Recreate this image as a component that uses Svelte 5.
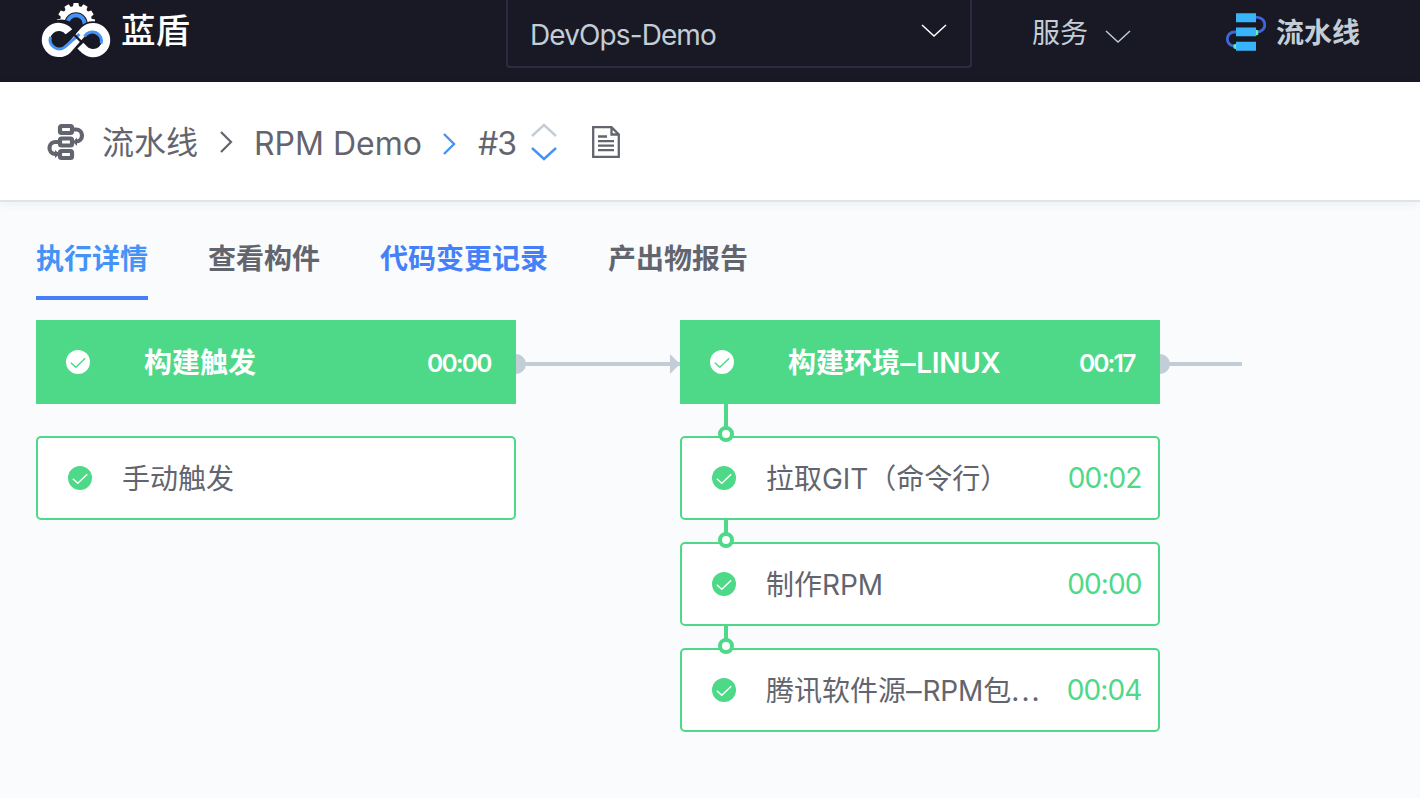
<script>
  const tabs = [
    { label: '执行详情', tone: 'active' },
    { label: '查看构件', tone: '' },
    { label: '代码变更记录', tone: 'hover' },
    { label: '产出物报告', tone: '' }
  ];
  const stages = [
    {
      name: '构建触发', dash: '', latin: '', time: '00:00', linked: false,
      atoms: [{ a: '手动触发', dash: '', b: '', c: '', more: '', time: '' }]
    },
    {
      name: '构建环境', dash: '–', latin: 'LINUX', time: '00:17', linked: true,
      atoms: [
        { a: '拉取', dash: '', b: 'GIT', c: '（命令行）', more: '', time: '00:02' },
        { a: '制作', dash: '', b: 'RPM', c: '', more: '', time: '00:00' },
        { a: '腾讯软件源', dash: '–', b: 'RPM', c: '包', more: '...', time: '00:04' }
      ]
    }
  ];
  const teeth = [-90, -60, -30, 0, 30, 60, 90];
</script>

{#snippet check(fill, mark)}
  <svg class="check" width="24" height="24" viewBox="0 0 24 24">
    <circle cx="12" cy="12" r="12" fill={fill} />
    <path d="M4.8 12.7 9.8 17.3 19.2 8.2" fill="none" stroke={mark} stroke-width="1.4" />
  </svg>
{/snippet}

<div class="page">
  <header>
    <div class="brand">
      <svg width="70" height="58" viewBox="41 0 70 58" fill="none">
        {#each teeth as angle}
          <path d="M72.6 8 73.6 3h4.8l1 5z" fill="#fff" transform={`rotate(${angle} 76 22)`} />
        {/each}
        <circle cx="76" cy="22" r="16" fill="#fff" />
        <circle cx="76" cy="24" r="11.7" fill="#191925" />
        <circle cx="76" cy="24" r="8.7" stroke="#4693f8" stroke-width="4" />
        <path d="M59 40H93L76 23z" fill="#191925" />
        <path d="M72 31.5A13 13 0 1 0 67.5 50L84 31A13 13 0 1 1 84 49.3L80.3 45.5" stroke="#191925" stroke-width="12" />
        <path d="M69 31.8A13 13 0 1 0 67.6 49.6L84.4 30.5A13 13 0 1 1 83 48.3L80.4 45.6" stroke="#fff" stroke-width="8.2" />
        <path d="M50.5 37A9.2 9.2 0 0 0 64.7 47.1L79.5 34.2" stroke="#4693f8" stroke-width="3" />
        <path d="M84.5 36.5A9.2 9.2 0 0 1 101.3 43.5" stroke="#4693f8" stroke-width="3" />
        <path d="M73 33.5 81.5 42" stroke="#191925" stroke-width="2.4" />
      </svg>
      <span>蓝盾</span>
    </div>
    <div class="select">
      <span>DevOps-Demo</span>
      <svg width="26" height="14" viewBox="0 0 26 14"><path d="m1 1 12 11L25 1" fill="none" stroke="#fff" stroke-width="1.5" /></svg>
    </div>
    <div class="service">
      <span>服务</span>
      <svg width="26" height="14" viewBox="0 0 26 14"><path d="m1 1 12 11L25 1" fill="none" stroke="#c3cdd7" stroke-width="1.4" /></svg>
    </div>
    <div class="current">
      <svg width="40" height="38" viewBox="0 0 40 38">
        <path d="M30 4.4h1.5a7.3 7.3 0 0 1 0 14.6H30M10 19H8.3a7 7 0 0 0 0 14H10" fill="none" stroke="#4264d9" stroke-width="2.8" />
        <path d="M10 .2h20v9H10zm0 14.3h20v8.8H10zm0 14.3h20v9H10z" fill="#38b5fa" />
        <path d="m30 16.8 2.2.8v4.2l-2.2.8zM10 30.8l-2.5 1v3.4l2.5 1z" fill="#63f49d" />
      </svg>
      <b>流水线</b>
    </div>
  </header>

  <nav class="crumbs">
    <svg class="flow" width="38" height="38" viewBox="0 0 38 38" fill="none" stroke="#63656e" stroke-width="4.2">
      <rect x="13" y="3" width="12" height="7" rx="1.5" />
      <rect x="13" y="15.5" width="12" height="7" rx="1.5" />
      <rect x="13" y="28" width="12" height="7" rx="1.5" />
      <path d="M26 6.5h3a6 6 0 0 1 0 12h-1M13 19H9a6 6 0 0 0-1 12h3" />
      <path d="M30 14.5v8.5l-4-4zM8 27v8l4.5-4z" fill="#63656e" stroke="none" />
    </svg>
    <span class="root">流水线</span>
    <svg class="sep" width="14" height="24" viewBox="0 0 14 24"><path d="m2 2 10 10L2 22" fill="none" stroke="#63656e" stroke-width="2.2" /></svg>
    <span class="project">RPM Demo</span>
    <svg class="sep second" width="14" height="24" viewBox="0 0 14 24"><path d="m2 2 10 10L2 22" fill="none" stroke="#4693f8" stroke-width="2.4" /></svg>
    <span class="build">#3</span>
    <svg class="switch" width="28" height="38" viewBox="0 0 28 38" fill="none" stroke-width="2.4">
      <path d="M2 13 14 2l12 11" stroke="#c3cdd7" /><path d="m2 25 12 11 12-11" stroke="#4693f8" />
    </svg>
    <svg class="doc" width="28" height="32" viewBox="0 0 28 32" fill="none" stroke="#63656e" stroke-width="2.3">
      <path d="M1.2 1.2h18.3L26.8 8.5v22.3H1.2zM19.5 1v7.5H27M6 10.5h9M6 15.2h16M6 19.7h16M6 24.2h16" />
    </svg>
  </nav>

  <main>
    <div class="tabs">
      {#each tabs as tab}
        <div class="tab {tab.tone}">{tab.label}</div>
      {/each}
    </div>
    <div class="pipeline">
      {#each stages as stage}
        <section class="stage" class:linked={stage.linked}>
          <div class="head">
            {@render check('#fff', '#4dd988')}
            <b class="name">{stage.name}<span class="dash">{stage.dash}</span><span>{stage.latin}</span></b>
            <b class="time">{stage.time}</b>
          </div>
          {#each stage.atoms as atom}
            <div class="atom">
              {@render check('#4dd988', '#fff')}
              <span class="label">{atom.a}<span class="dash">{atom.dash}</span><span>{atom.b}</span>{atom.c}<span class="more">{atom.more}</span></span>
              <span class="time">{atom.time}</span>
            </div>
          {/each}
        </section>
        <div class="wire"></div>
      {/each}
    </div>
  </main>
</div>

<style>
  :global(body) { margin: 0; background: #fafbfd; }
  .page { width: 1420px; height: 798px; overflow: hidden; font-family: Inter, "Noto Sans CJK SC", sans-serif; color: #63656e; font-size: 28px; background: #fafbfd; }
  svg { display: block; flex: none; }
  span, b { white-space: nowrap; }
  header { display: flex; height: 82px; background: #191925; color: #c3cdd7; }
  .brand { display: flex; width: 465px; padding-left: 41px; color: #fff; }
  .brand span { font-size: 34.5px; font-weight: 500; line-height: 62px; margin-left: 10px; }
  .select { box-sizing: border-box; display: flex; justify-content: space-between; width: 466px; height: 68px; border: 2px solid #2d2b43; border-top: 0; border-radius: 0 0 4px 4px; padding: 0 23px 0 22px; line-height: 70px; }
  .select span { letter-spacing: -.9px; }
  .select svg { margin-top: 24px; }
  .service { display: flex; width: 194px; padding-left: 60px; line-height: 66px; }
  .service svg { margin: 30px 0 0 17px; }
  .current { display: flex; line-height: 66px; }
  .current svg { margin: 13px 10px 0 0; }
  .crumbs { box-sizing: border-box; height: 120px; display: flex; align-items: center; background: #fff; border-bottom: 2px solid #dde4eb; padding-left: 47px; font-size: 32px; position: relative; box-shadow: 0 2px 10px rgba(50, 70, 90, .07); }
  .flow { margin: 2px 17px 0 0; }
  .root { width: 117px; line-height: 118px; padding-top: 3px; }
  .sep { margin-top: 1px; }
  .second { margin-top: 5px; }
  .project { width: 188px; margin-left: 21px; padding-top: 4px; }
  .build { width: 52px; margin-left: 22px; padding-top: 4px; letter-spacing: -1px; }
  .switch { margin-top: 2px; }
  .doc { margin: 2px 0 0 34px; }
  main { padding-left: 36px; }
  .tabs { display: flex; gap: 60px; height: 98px; font-weight: 700; }
  .tab { box-sizing: border-box; line-height: 114px; height: 98px; }
  .active { color: #4693f8; border-bottom: 4px solid #4680f8; }
  .hover { color: #4680f8; }
  .pipeline { display: flex; padding-top: 20px; }
  .stage { width: 480px; flex: none; }
  .head { box-sizing: border-box; height: 84px; display: flex; align-items: center; background: #4dd988; color: #fff; padding: 0 25.5px 0 30px; margin-bottom: 32px; }
  .head .check { margin-top: -1px; }
  .head .name { margin-left: 54px; flex: 1; padding-bottom: 2px; }
  .head .name span { font-weight: 600; letter-spacing: -.3px; }
  .head .time { font-size: 24.5px; font-weight: 600; letter-spacing: -1.8px; padding-top: 2px; }
  .atom { box-sizing: border-box; height: 84px; display: flex; align-items: center; background: #fff; border: 2px solid #4dd988; border-radius: 5px; padding: 0 16.5px 0 30px; margin-bottom: 22px; position: relative; }
  .label { margin-left: 30px; flex: 1; padding-bottom: 2px; }
  .label span { letter-spacing: -.1px; }
  .dash { display: inline-block; transform: scaleX(1.12); transform-origin: left; }
  .dash:not(:empty) { margin-right: 2.5px; }
  .label .more { letter-spacing: 2px; }
  .atom .time { color: #4dd988; letter-spacing: -.9px; }
  .linked .atom::before { content: ""; position: absolute; left: 42px; top: -24px; width: 4px; height: 22px; background: #4dd988; }
  .linked .head + .atom::before { top: -34px; height: 32px; }
  .linked .atom::after { content: ""; box-sizing: border-box; position: absolute; left: 36px; top: -12px; width: 16px; height: 16px; border: 4px solid #4dd988; border-radius: 50%; background: #fff; }
  .wire { width: 164px; height: 4px; margin-top: 42px; background: #c3cdd7; position: relative; flex: none; }
  .wire::before { content: ""; position: absolute; left: 0; top: -8px; width: 10px; height: 20px; border-radius: 0 10px 10px 0; background: #c3cdd7; }
  .wire::after { content: ""; position: absolute; right: 0; top: -8px; border-left: 10px solid #c3cdd7; border-top: 10px solid transparent; border-bottom: 10px solid transparent; }
  .wire:last-child { width: 82px; }
  .wire:last-child::after { display: none; }
</style>
